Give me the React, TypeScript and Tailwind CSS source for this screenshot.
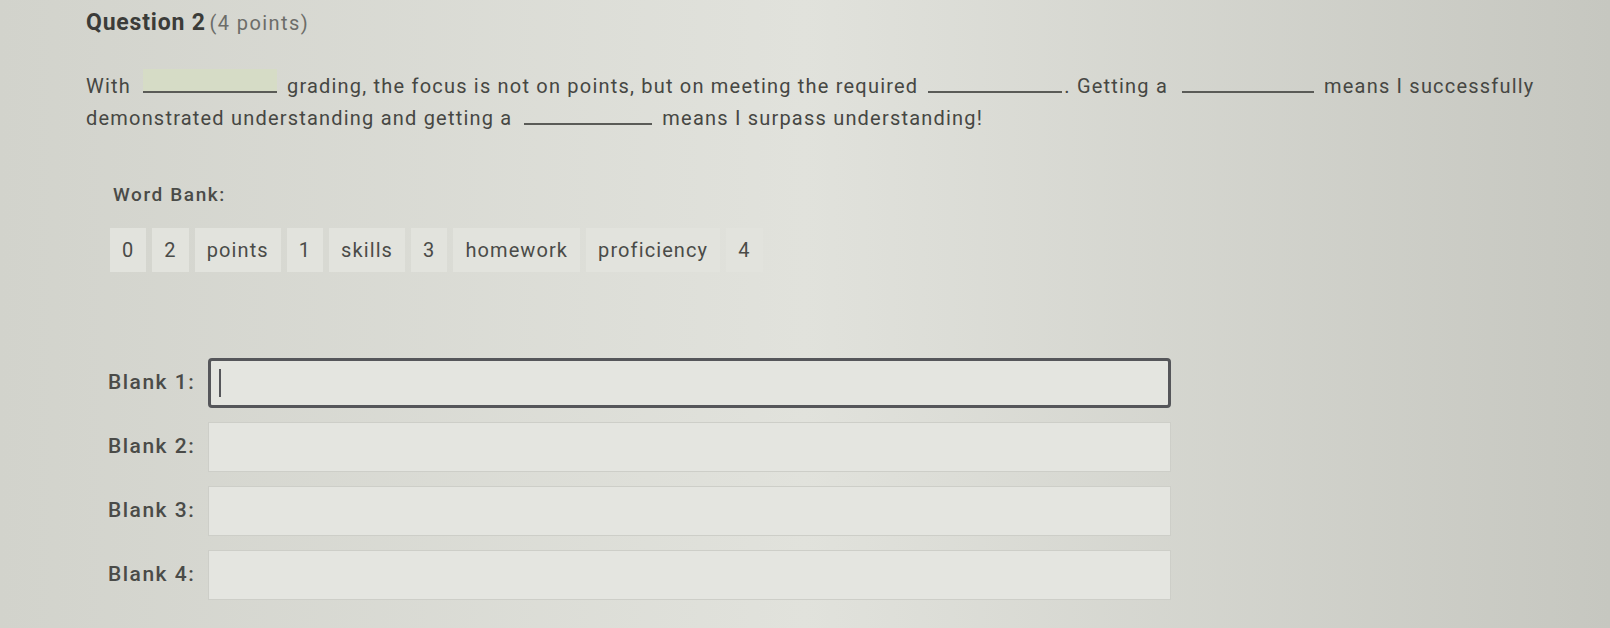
import React from "react";

function Blank({ w = 130, hl = false, ml = 10, mr = 10 }: { w?: number; hl?: boolean; ml?: number; mr?: number }) {
  return (
    <span
      className={`inline-block align-baseline h-[24px] border-b-[2px] border-[#5a5b57] ${hl ? "bg-[#d6dcc6]" : ""}`}
      style={{ width: w, marginLeft: ml, marginRight: mr }}
    />
  );
}

const words = ["0", "2", "points", "1", "skills", "3", "homework", "proficiency", "4"];

export default function App() {
  return (
    <div
      className="w-[1610px] h-[628px] overflow-hidden bg-gradient-to-r from-[#d2d3cc] via-[#e1e2dc] to-[#c6c7c0] text-[#464743]"
      style={{ fontFamily: "Roboto, 'Liberation Sans', Arial, sans-serif" }}
    >
      <div className="pl-[86px] pt-[9px]">
        <h2 className="leading-[28px]">
          <span className="text-[23px] font-bold tracking-[0.8px] text-[#3b3c39]">Question 2</span>{" "}
          <span className="text-[20px] tracking-[1.4px] text-[#6c6d69]">(4 points)</span>
        </h2>

        <p className="mt-[30px] w-[1460px] text-[20px] tracking-[1.2px] leading-[29px]">
          With
          <Blank w={134} hl ml={12} mr={10} />
          grading, the focus is not on points, but on meeting the required
          <Blank w={134} ml={10} mr={2} />. Getting a
          <Blank w={132} ml={14} mr={10} />
          means I successfully demonstrated understanding and getting a
          <Blank w={128} ml={12} mr={10} />
          means I surpass understanding!
        </p>

        <div className="mt-[48px] pl-[27px]">
          <div className="text-[19px] font-medium tracking-[1.6px] text-[#4a4b48]">Word Bank:</div>
          <div className="mt-[18px] flex gap-[6px] -ml-[3px]">
            {words.map((w, i) => (
              <span
                key={i}
                className="px-[12px] py-[7px] bg-[#e2e3dd] text-[20px] tracking-[1.1px] text-[#4a4b48]"
              >
                {w}
              </span>
            ))}
          </div>
        </div>

        <div className="mt-[86px] pl-[22px] flex flex-col gap-[14px]">
          {[1, 2, 3, 4].map((n) => (
            <div key={n} className="flex items-center">
              <label className="w-[100px] text-[21px] font-medium tracking-[1.5px] text-[#4a4b48]">
                Blank {n}:
              </label>
              <div
                className={`w-[963px] h-[50px] bg-[#e4e5e0] flex items-center ${
                  n === 1
                    ? "border-[3px] border-[#55565a] rounded-[4px]"
                    : "border border-[#cdcec8]"
                }`}
              >
                {n === 1 && <span className="ml-[8px] w-[2px] h-[28px] bg-[#55565a]" />}
              </div>
            </div>
          ))}
        </div>
      </div>
    </div>
  );
}
